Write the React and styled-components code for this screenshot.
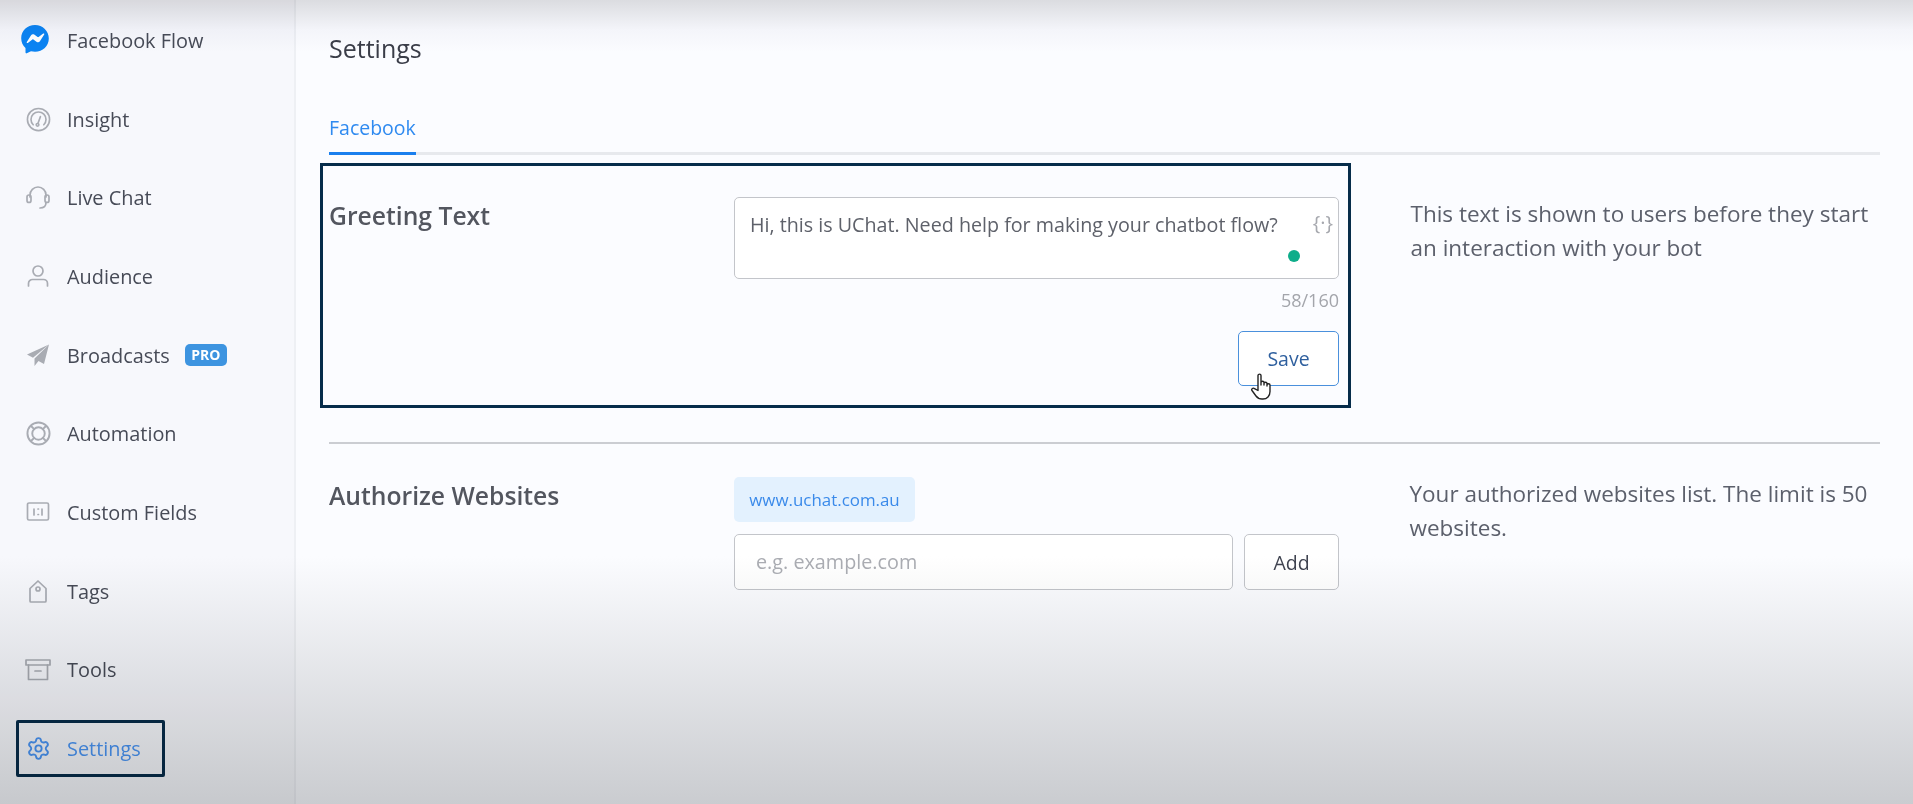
import styled, { createGlobalStyle } from "styled-components";
import { Settings as GearIcon } from "lucide-react";

const GlobalStyle = createGlobalStyle`
    html, body {
        margin: 0;
        padding: 0;
        height: 100%;
        background: #fbfcff;
    }

    * {
        box-sizing: border-box;
    }
`;

const Page = styled.div`
    position: relative;
    display: flex;
    width: 1913px;
    height: 804px;
    overflow: hidden;
    font-family: "Open Sans", "Noto Sans", sans-serif;
    color: #3f4350;
    background: #fbfcff;
    filter: blur(.4px);

    &::after {
        content: "";
        position: absolute;
        inset: 0;
        pointer-events: none;
        mix-blend-mode: multiply;
        background: linear-gradient(to bottom, #dfdfe0 0, #f8f8fa 30px, #fff 52px, #fff 556px, #cecfd0 804px);
    }
`;

const Sidebar = styled.nav`
    flex: 0 0 296px;
    display: flex;
    flex-direction: column;
    padding: 1px 0 0 16px;
    background: #f7f8fc;
    border-right: 2px solid #eef0f4;
`;

const NavItem = styled.div`
    display: flex;
    align-items: center;
    height: 78.7px;
    color: ${props => props.$active ? "#4a96f5" : "#474b57"};
`;

const NavBox = styled.div`
    display: flex;
    align-items: center;
    width: 149px;
    height: 57px;
    padding-left: 7px;
    border: 3px solid ${props => props.$active ? "#062c4a" : "transparent"};
    border-radius: 2px;
`;

const NavIcon = styled.span`
    flex: 0 0 24px;
    display: flex;
    align-items: center;
    justify-content: center;
    width: 24px;
    height: 24px;
    margin-right: 17px;
    color: #a9acb3;

    svg {
        flex-shrink: 0;
    }
`;

const MessengerSvg = styled.svg`
    margin-right: 6px;
    margin-top: -3px;
`;

const NavLabel = styled.span`
    font-size: 19.9px;
    white-space: nowrap;
`;

const ProBadge = styled.span`
    margin-left: 15px;
    padding: 1px 6.5px;
    border-radius: 5px;
    background: #3d94e0;
    color: #fff;
    font-size: 14px;
    font-weight: 700;
    line-height: 20px;
`;

const Main = styled.main`
    flex: 1;
    min-width: 0;
    padding: 28px 33px 0 33px;
`;

const Title = styled.h1`
    margin: 0;
    font-size: 25px;
    font-weight: 400;
    line-height: 40px;
    color: #3a3d48;
`;

const TabBar = styled.div`
    display: flex;
    margin-top: 47px;
    border-bottom: 3px solid #e7e9ed;
`;

const Tab = styled.div`
    margin-bottom: -3px;
    padding-bottom: 11px;
    font-size: 19.5px;
    line-height: 26px;
    color: #2f8af0;
    border-bottom: 3px solid #1a7fee;
`;

const Section = styled.section`
    display: flex;
    align-items: flex-start;
    margin-top: 8px;
`;

const SectionBody = styled.div`
    display: flex;
    flex: 0 0 1030px;
    margin-left: -9px;
    padding: ${props => props.$framed ? "31px 9px 19px 6px" : "0 9px"};
    border: ${props => props.$framed ? "3px solid #062c4a" : "none"};
`;

const SectionTitle = styled.h2`
    flex: 0 0 405px;
    margin: 2px 0 0;
    font-size: 24.7px;
    font-weight: 600;
    line-height: 34px;
    color: #53565f;
`;

const Fields = styled.div`
    display: flex;
    flex-direction: column;
    flex: 0 0 605px;
`;

const Aside = styled.p`
    margin: ${props => props.$top}px 0 0 59.5px;
    width: 470px;
    font-size: 22.5px;
    line-height: 34px;
    color: #5c606c;
`;

const TextBox = styled.div`
    position: relative;
    height: 82px;
    padding: 14px 15px;
    background: #fff;
    border: 1.5px solid #c3c5ca;
    border-radius: 5px;
    font-size: 19.7px;
    line-height: 26px;
    color: #5e616a;
`;

const VarToken = styled.span`
    position: absolute;
    top: 12px;
    right: 5px;
    font-size: 20px;
    color: #a6a8ae;
`;

const StatusDot = styled.span`
    position: absolute;
    top: 52px;
    right: 38px;
    width: 12px;
    height: 12px;
    border-radius: 50%;
    background: #0ead8a;
`;

const Counter = styled.div`
    margin-top: 8px;
    font-size: 18px;
    line-height: 26px;
    text-align: right;
    color: #a3a5ab;
`;

const ButtonRow = styled.div`
    position: relative;
    display: flex;
    justify-content: flex-end;
    margin-top: 18px;
`;

const Button = styled.button`
    width: ${props => props.$width}px;
    height: ${props => props.$height}px;
    padding: 0;
    background: #fff;
    border: 1.5px solid ${props => props.$primary ? "#4a90dc" : "#c3c5ca"};
    border-radius: 5px;
    font-family: inherit;
    font-size: 19.5px;
    color: ${props => props.$primary ? "#2e5f9e" : "#3f4350"};
`;

const HandCursor = styled.svg`
    position: absolute;
    right: 64px;
    bottom: -15px;
    width: 24px;
    height: 28px;
`;

const Divider = styled.hr`
    margin: 34px 0 0;
    border: 0;
    border-top: 2px solid #cbcdd2;
`;

const Chip = styled.div`
    align-self: flex-start;
    width: 181px;
    height: 45px;
    margin-bottom: 12px;
    background: #e3f1fe;
    border-radius: 5px;
    font-size: 16.9px;
    line-height: 45px;
    text-align: center;
    color: #3a8aea;
`;

const AddRow = styled.div`
    display: flex;
    gap: 11px;
`;

const FakeInput = styled.div`
    flex: 1;
    height: 56px;
    padding: 0 21px;
    background: #fff;
    border: 1.5px solid #c3c5ca;
    border-radius: 5px;
    font-size: 19.8px;
    line-height: 53px;
    color: #abadb3;
`;

const LowerSection = styled(Section)`
    margin-top: 0;
    padding-top: 33px;
`;

const stroke = { fill: "none", stroke: "currentColor", strokeWidth: 1.7, strokeLinecap: "round", strokeLinejoin: "round" };

const MessengerIcon = () => (
    <MessengerSvg width="30" height="30" viewBox="0 0 30 30">
        <path fill="#0b84f3" d="M15 1C7.2 1 1.2 6.7 1.2 14.2c0 3.9 1.6 7.3 4.3 9.7v4.7c0 .6.6 1 1.2.7l4.3-2c1.2.3 2.6.5 4 .5 7.8 0 13.8-5.7 13.8-13.2S22.8 1 15 1z" />
        <path fill="#fff" d="M6.8 18l4.3-6.8c.7-1.1 2.1-1.3 3.1-.6l3.4 2.5c.3.2.7.2 1 0l4.6-3.5c.6-.5 1.4.3 1 .9l-4.3 6.8c-.7 1.1-2.1 1.3-3.1.6l-3.4-2.5c-.3-.2-.7-.2-1 0l-4.6 3.5c-.6.5-1.4-.3-1-.9z" />
    </MessengerSvg>
);

const InsightIcon = () => (
    <svg width="25" height="25" viewBox="0 0 26 26" {...stroke}>
        <circle cx="13" cy="13" r="11.5" />
        <path d="M7.5 18.5a7.8 7.8 0 1 1 11 0" />
        <circle cx="12" cy="18.5" r="1.4" />
        <path d="M12.5 17 15 10" />
    </svg>
);

const HeadsetIcon = () => (
    <svg width="26" height="26" viewBox="0 0 26 26" {...stroke}>
        <path d="M5 12V10a8 8 0 0 1 16 0v2" />
        <rect x="2" y="10" width="4" height="7.5" rx="2" />
        <rect x="20" y="10" width="4" height="7.5" rx="2" />
        <path d="M21 17.5c0 3.5-2.5 5.5-6 5.5" />
    </svg>
);

const UserIcon = () => (
    <svg width="24" height="24" viewBox="0 0 24 24" {...stroke}>
        <circle cx="12" cy="7" r="5" />
        <path d="M2.5 22v-2.500a4 4 0 0 1 4-4h11a4 4 0 0 1 4 4V22" />
    </svg>
);

const PlaneIcon = () => (
    <svg width="24" height="24" viewBox="0 0 24 24" fill="currentColor">
        <path d="M23 1.5 1 11.5l6 3.3L23 1.5z" />
        <path d="M23 1.5 8.5 15.5V23l4-5 5.5 3L23 1.5z" />
    </svg>
);

const RingIcon = () => (
    <svg width="25" height="25" viewBox="0 0 26 26" {...stroke} strokeWidth="2">
        <circle cx="13" cy="13" r="11.5" />
        <circle cx="13" cy="13" r="6.5" />
        <path d="m6 6 2.5 2.5M20 6l-2.5 2.500M6 20l2.500-2.500M20 20l-2.500-2.500" />
    </svg>
);

const FieldsIcon = () => (
    <svg width="24" height="22" viewBox="0 0 24 22" {...stroke}>
        <rect x="1.5" y="2" width="21" height="17" rx="1.5" />
        <path d="M8 8v6M12 8h.5M12 13.5h.5M16 8v6" />
    </svg>
);

const TagIcon = () => (
    <svg width="22" height="26" viewBox="0 0 22 26" {...stroke}>
        <path d="M3 10.5 11 3l8 7.5V23a1 1 0 0 1-1 1H4a1 1 0 0 1-1-1V10.5z" />
        <circle cx="11" cy="11" r="2" />
    </svg>
);

const BoxIcon = () => (
    <svg width="26" height="24" viewBox="0 0 26 24" {...stroke}>
        <rect x="1" y="2" width="24" height="5" />
        <path d="M3.5 7v14.5h19V7M10 13h6" />
    </svg>
);

const NAV_ITEMS = [
    { label: "Facebook Flow", icon: <MessengerIcon /> },
    { label: "Insight", icon: <InsightIcon /> },
    { label: "Live Chat", icon: <HeadsetIcon /> },
    { label: "Audience", icon: <UserIcon /> },
    { label: "Broadcasts", icon: <PlaneIcon />, pro: true },
    { label: "Automation", icon: <RingIcon /> },
    { label: "Custom Fields", icon: <FieldsIcon /> },
    { label: "Tags", icon: <TagIcon /> },
    { label: "Tools", icon: <BoxIcon /> },
    { label: "Settings", icon: <GearIcon size={25} strokeWidth={1.8} color="#4a96f5" />, active: true },
];

export default function App() {
    return (
        <Page>
            <GlobalStyle />
            <Sidebar>
                {NAV_ITEMS.map((item) => (
                    <NavItem key={item.label} $active={item.active}>
                        <NavBox $active={item.active}>
                            <NavIcon>{item.icon}</NavIcon>
                            <NavLabel>{item.label}</NavLabel>
                            {item.pro && <ProBadge>PRO</ProBadge>}
                        </NavBox>
                    </NavItem>
                ))}
            </Sidebar>
            <Main>
                <Title>Settings</Title>
                <TabBar>
                    <Tab>Facebook</Tab>
                </TabBar>
                <Section>
                    <SectionBody $framed>
                        <SectionTitle>Greeting Text</SectionTitle>
                        <Fields>
                            <TextBox>
                                Hi, this is UChat. Need help for making your chatbot flow?
                                <VarToken>{"{·}"}</VarToken>
                                <StatusDot />
                            </TextBox>
                            <Counter>58/160</Counter>
                            <ButtonRow>
                                <Button $primary $width={101} $height={55}>Save</Button>
                                <HandCursor viewBox="0 0 24 28">
                                    <path fill="#fff" stroke="#222" strokeWidth="1.4" strokeLinejoin="round" d="M7 2.5c0-1.8 3-1.8 3 0V12V9.5c0-1.7 3-1.7 3 0V12v-1.5c0-1.7 3-1.7 3 0V13v-1c0-1.7 3-1.7 3 0v6.5c0 4.500-3 7.500-7 7.500h-1c-3 0-4.500-1-6-3l-4-5.500c-1-1.500 1.200-3.200 2.500-1.800L7 17.500V2.500z" />
                                </HandCursor>
                            </ButtonRow>
                        </Fields>
                    </SectionBody>
                    <Aside $top={34}>This text is shown to users before they start an interaction with your bot</Aside>
                </Section>
                <Divider />
                <LowerSection>
                    <SectionBody>
                        <SectionTitle>Authorize Websites</SectionTitle>
                        <Fields>
                            <Chip>www.uchat.com.au</Chip>
                            <AddRow>
                                <FakeInput>e.g. example.com</FakeInput>
                                <Button $width={95} $height={56}>Add</Button>
                            </AddRow>
                        </Fields>
                    </SectionBody>
                    <Aside $top={0}>Your authorized websites list. The limit is 50 websites.</Aside>
                </LowerSection>
            </Main>
        </Page>
    );
}
